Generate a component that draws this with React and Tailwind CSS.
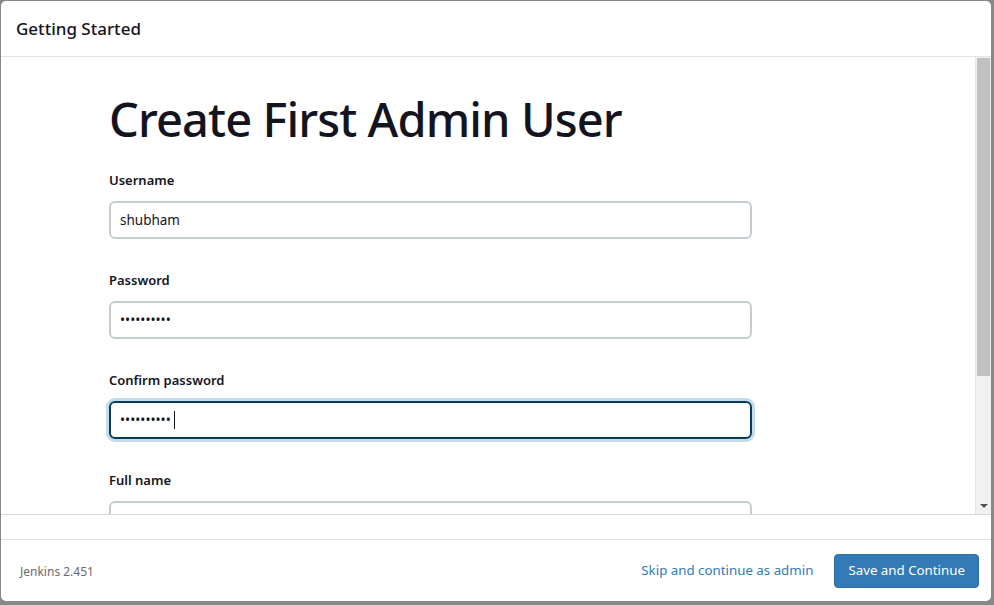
import { useState } from 'react';

const font = { fontFamily: '"Noto Sans", "Open Sans", sans-serif' };

const Field = ({ label, type = 'text', value, focused, onChange }) => (
    <div className="flex flex-col">
        <label className="text-[13px] font-semibold text-[#14141f] leading-5 h-[20px] mb-[11px]">{label}</label>
        <input
            type={type}
            value={value}
            onChange={onChange}
            autoFocus={focused}
            className={
                focused
                    ? 'w-[643px] h-[38px] px-[9px] text-[13.5px] text-[#14141f] rounded-[6px] border-2 border-[#0b3c5d] outline-none ring-[3px] ring-[#c4dbea]'
                    : 'w-[643px] h-[38px] px-[9px] text-[13.5px] text-[#14141f] rounded-[6px] border-2 border-[#c6cdd1] outline-none'
            }
        />
    </div>
);

// classic scrollbar: track with thumb, down arrow
const ScrollBar = () => (
    <div className="w-[16px] shrink-0 bg-[#f1f1f1] flex flex-col border-l border-[#e8e8e8]">
        <div className="h-[1px]"></div>
        <div className="mx-[1px] h-[318px] bg-[#c1c1c1]"></div>
        <div className="flex-1"></div>
        <div className="h-[16px] flex items-center justify-center">
            <svg width="8" height="5" viewBox="0 0 8 5">
                <path d="M0 0 L8 0 L4 4 Z" fill="#505050" />
            </svg>
        </div>
    </div>
);

export default function App() {
    const [form, setForm] = useState({
        username: 'shubham',
        password: 'abcdefghij',
        confirm: 'abcdefghij',
        fullname: '',
    });
    const set = (k) => (e) => setForm({ ...form, [k]: e.target.value });

    return (
        <div style={font} className="w-[994px] h-[605px] bg-[#888888] pl-px pt-px pr-[3px] pb-[4px]">
            <div className="w-full h-full bg-white rounded-[5px] flex flex-col overflow-hidden">
                <header className="h-[56px] shrink-0 border-b border-[#e3e3e3] px-[15px] flex items-center">
                    <h1 className="text-[17px] font-medium text-[#14141f]">Getting Started</h1>
                </header>

                <div className="h-[458px] shrink-0 flex border-b border-[#d9d9d9]">
                    <div className="flex-1 overflow-hidden">
                        <div className="pl-[108px] pt-[30px]">
                            <h2 className="text-[47px] font-medium text-[#14141f] leading-[64px] mb-[19px] tracking-[-0.9px]">Create First Admin User</h2>
                            <div className="flex flex-col gap-[31px]">
                                <Field label="Username" value={form.username} onChange={set('username')} />
                                <Field label="Password" type="password" value={form.password} onChange={set('password')} />
                                <div className="relative">
                                    <Field label="Confirm password" type="password" value={form.confirm} focused onChange={set('confirm')} />
                                    <span className="absolute left-[65px] top-[41px] w-px h-[18px] bg-[#14141f]"></span>
                                </div>
                                <Field label="Full name" value={form.fullname} onChange={set('fullname')} />
                            </div>
                        </div>
                    </div>
                    <ScrollBar />
                </div>

                <div className="h-[25px] shrink-0 border-b border-[#e3e3e3]"></div>

                <footer className="flex-1 flex items-center justify-between pl-[19px] pr-[12px]">
                    <span className="text-[12px] text-[#6b6b6b] pt-[2px]">Jenkins 2.451</span>
                    <div className="flex items-center gap-[21px]">
                        <a className="text-[13.3px] text-[#337ab7] cursor-pointer">Skip and continue as admin</a>
                        <button className="h-[34px] px-[13px] bg-[#337ab7] text-white text-[13.3px] rounded-[4px] border border-[#2e6da4]">
                            Save and Continue
                        </button>
                    </div>
                </footer>
            </div>
        </div>
    );
}
